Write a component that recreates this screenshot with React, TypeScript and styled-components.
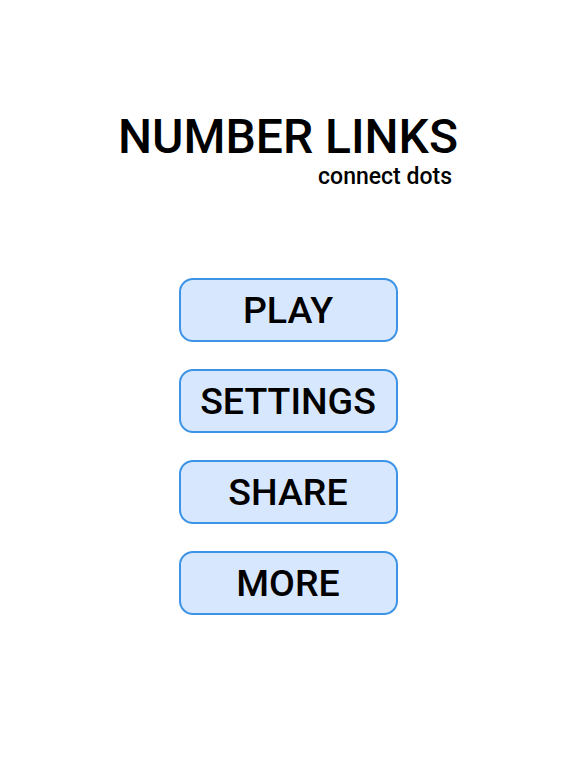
import React from 'react'
import styled, { createGlobalStyle } from 'styled-components'

const GlobalStyle = createGlobalStyle`
  html, body {
    margin: 0;
    padding: 0;
    background: #ffffff;
  }
  body {
    font-family: Roboto, "Liberation Sans", sans-serif;
  }
`

const Screen = styled.div`
  width: 576px;
  min-height: 768px;
  display: flex;
  flex-direction: column;
  align-items: center;
  padding-top: 110px;
  box-sizing: border-box;
`

const Header = styled.div`
  display: flex;
  flex-direction: column;
  align-items: flex-end;
`

const Title = styled.h1`
  margin: 0;
  font-size: 48px;
  font-weight: 500;
  line-height: 54px;
  color: #000;
`

const Subtitle = styled.p`
  margin: 1px 6px 0 0;
  font-size: 23px;
  font-weight: 500;
  line-height: 24px;
  color: #000;
`

const Menu = styled.nav`
  margin-top: 89px;
  display: flex;
  flex-direction: column;
  gap: 27px;
`

const MenuButton = styled.button`
  width: 219px;
  height: 64px;
  box-sizing: border-box;
  border: 2px solid #3d93e6;
  border-radius: 14px;
  background: #d7e7fe;
  font-family: Roboto, "Liberation Sans", sans-serif;
  font-size: 37.5px;
  font-weight: 500;
  color: #000;
  padding: 0;
  cursor: pointer;
`

const items = ['PLAY', 'SETTINGS', 'SHARE', 'MORE']

function App() {
  return (
    <Screen>
      <GlobalStyle />
      <Header>
        <Title>NUMBER LINKS</Title>
        <Subtitle>connect dots</Subtitle>
      </Header>
      <Menu>
        {items.map((label) => (
          <MenuButton key={label}>{label}</MenuButton>
        ))}
      </Menu>
    </Screen>
  )
}

export default App
